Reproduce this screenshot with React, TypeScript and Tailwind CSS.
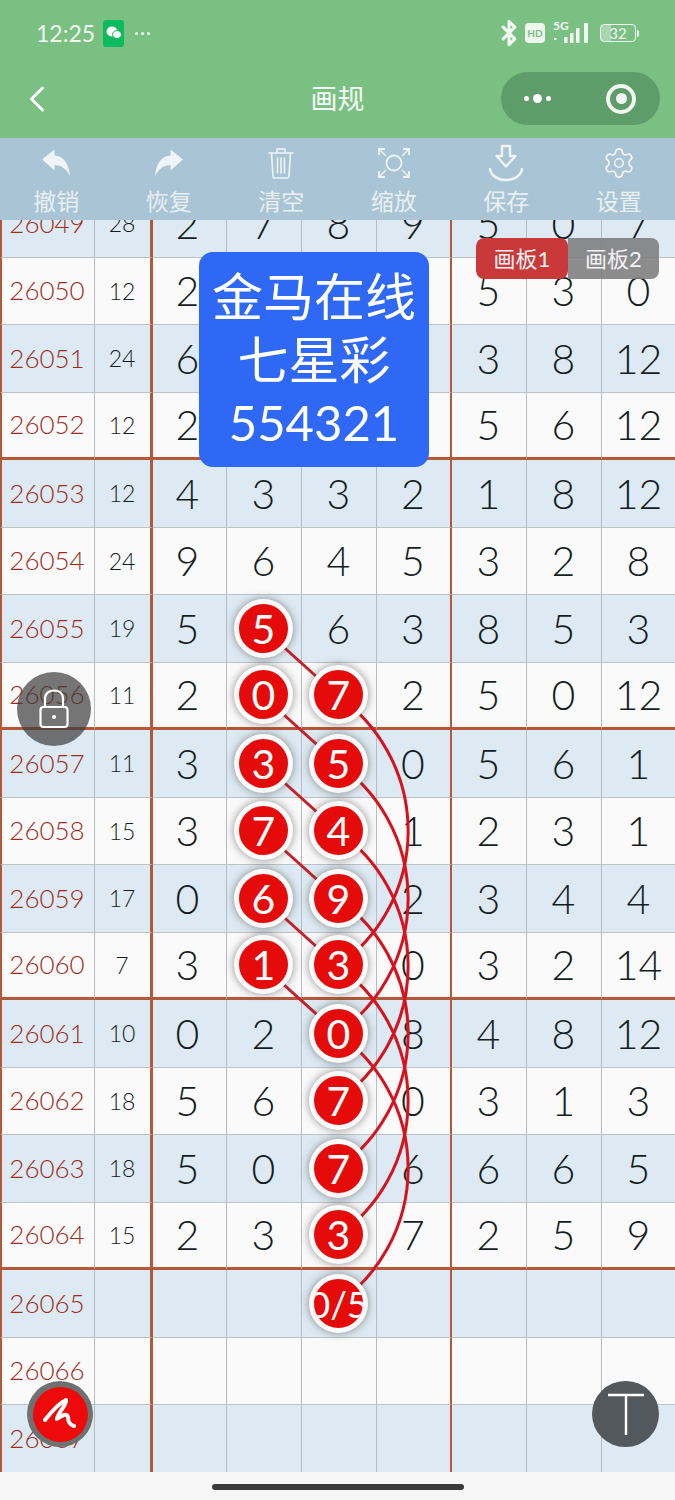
import React from "react";
import { ChevronLeft, Bluetooth, Settings } from "lucide-react";

type Row = { id: string; n: string; c: string[]; hit?: number[] };
const rows: Row[] = [
  { id: "26049", n: "28", c: ["2", "7", "8", "9", "5", "0", "7"] },
  { id: "26050", n: "12", c: ["2", "", "", "", "5", "3", "0"] },
  { id: "26051", n: "24", c: ["6", "", "", "", "3", "8", "12"] },
  { id: "26052", n: "12", c: ["2", "", "", "", "5", "6", "12"] },
  { id: "26053", n: "12", c: ["4", "3", "3", "2", "1", "8", "12"] },
  { id: "26054", n: "24", c: ["9", "6", "4", "5", "3", "2", "8"] },
  { id: "26055", n: "19", c: ["5", "5", "6", "3", "8", "5", "3"], hit: [1] },
  { id: "26056", n: "11", c: ["2", "0", "7", "2", "5", "0", "12"], hit: [1, 2] },
  { id: "26057", n: "11", c: ["3", "3", "5", "0", "5", "6", "1"], hit: [1, 2] },
  { id: "26058", n: "15", c: ["3", "7", "4", "1", "2", "3", "1"], hit: [1, 2] },
  { id: "26059", n: "17", c: ["0", "6", "9", "2", "3", "4", "4"], hit: [1, 2] },
  { id: "26060", n: "7", c: ["3", "1", "3", "0", "3", "2", "14"], hit: [1, 2] },
  { id: "26061", n: "10", c: ["0", "2", "0", "8", "4", "8", "12"], hit: [2] },
  { id: "26062", n: "18", c: ["5", "6", "7", "0", "3", "1", "3"], hit: [2] },
  { id: "26063", n: "18", c: ["5", "0", "7", "6", "6", "6", "5"], hit: [2] },
  { id: "26064", n: "15", c: ["2", "3", "3", "7", "2", "5", "9"], hit: [2] },
  { id: "26065", n: "", c: ["", "", "0/5", "", "", "", ""], hit: [2] },
  { id: "26066", n: "", c: ["", "", "", "", "", "", ""] },
  { id: "26067", n: "", c: ["", "", "", "", "", "", ""] },
];

const cy = (i: number) => 190 + 67.5 * i + 33.5;

function UndoIcon({ flip }: { flip?: boolean }) {
  return (
    <svg width="30" height="28" viewBox="0 0 30 28" className={flip ? "-scale-x-100" : ""}>
      <path d="M1 10.5 L13.5 0.5 L13.5 6.5 C22 7 28 14 29 27 C25 19.5 20 16 13.5 16 L13.5 21.5 Z" fill="#eef4f7" />
    </svg>
  );
}

function TrashIcon() {
  return (
    <svg width="26" height="32" viewBox="0 0 26 32" fill="none" stroke="#eef4f7" strokeWidth="1.6" strokeLinecap="round" strokeLinejoin="round">
      <path d="M1 6 H25 M9 5.5 V2 H17 V5.5" />
      <path d="M3.5 6 L5 29 C5 30 6 31 7 31 H19 C20 31 21 30 21 29 L22.5 6" />
      <path d="M9.5 11 V26 M13 11 V26 M16.5 11 V26" />
    </svg>
  );
}

function ScanIcon() {
  return (
    <svg width="32" height="32" viewBox="0 0 32 32" fill="none" stroke="#eef4f7" strokeWidth="1.8">
      <path d="M1 8 V2 H7 M25 2 H31 V8 M1 24 V30 H7 M25 30 H31 V24" />
      <path d="M1.5 2.5 L8 9 M30.5 2.5 L24 9 M1.5 29.5 L8 23 M30.5 29.5 L24 23" strokeWidth="1.4" />
      <circle cx="16" cy="16" r="7.5" />
    </svg>
  );
}

function SaveIcon() {
  return (
    <svg width="36" height="38" viewBox="0 0 36 38" fill="none" stroke="#eef4f7" strokeWidth="2.4" strokeLinecap="round" strokeLinejoin="round">
      <path d="M14 2 H22 V12 H27.5 L18 22.5 L8.5 12 H14 Z" />
      <path d="M2 25 C3 32 10 36 18 36 C26 36 33 32 34 25" />
    </svg>
  );
}

function Tool({ icon, label }: { icon: React.ReactNode; label: string }) {
  return (
    <div className="flex w-[113px] flex-col items-center">
      <div className="flex h-[42px] items-center justify-center">{icon}</div>
      <div className="mt-[2px] text-[23px] leading-[30px] text-[#e8f0f4]">{label}</div>
    </div>
  );
}

function Ball({ v }: { v: string }) {
  return (
    <div className={`relative z-20 flex h-[59px] w-[59px] shrink-0 items-center justify-center overflow-hidden rounded-full border-[5px] border-[#fbfbfb] bg-[#e60b0b] font-normal text-white shadow-[0_0_8px_rgba(70,70,70,0.6)] ${v.length > 2 ? "text-[37px]" : "text-[41px]"}`}>
      <span className="whitespace-nowrap">{v}</span>
    </div>
  );
}

function Table() {
  return (
    <div className="h-[1252px] overflow-hidden">
      <div className="-mt-[30px] grid grid-cols-[95px_58px_74px_75px_75px_75px_75px_75px_73px] auto-rows-[67.5px]">
        {rows.map((r, i) => {
          const bg = i % 2 === 0 ? "bg-[#deeaf3]" : "bg-[#fafafa]";
          const thick = i === 3 || i === 7 || i === 11 || i === 15;
          const bb = thick ? "border-b-[3px] border-b-[#b5583a]" : "border-b border-b-[#bcc2c6]";
          return (
            <React.Fragment key={r.id}>
              <div className={`${bg} ${bb} flex items-center justify-center border-l-2 border-l-[#b5583a] border-r border-r-[#b6bcc0] pr-[2px] text-[26px] font-light text-[#a02c1a]`}>
                {r.id}
              </div>
              <div className={`${bg} ${bb} flex items-center justify-center border-r-[3px] border-r-[#b5583a] pr-[1px] text-[23px] font-light text-[#141d22]`}>
                {r.n}
              </div>
              {r.c.map((v, j) => {
                const rb = j === 3 ? "border-r-[2px] border-r-[#b5583a]" : j === 6 ? "" : "border-r border-r-[#b6bcc0]";
                const pad = j === 0 ? "pr-[4px]" : j === 6 ? "" : "pr-[1px]";
                const hit = r.hit?.includes(j);
                return (
                  <div key={j} className={`${bg} ${bb} ${rb} ${pad} flex items-center justify-center text-[41px] font-light text-[#141d22]`}>
                    {hit ? <Ball v={v} /> : v}
                  </div>
                );
              })}
            </React.Fragment>
          );
        })}
      </div>
    </div>
  );
}

export default function App() {
  const straight = [6, 7, 8, 9, 10, 11];
  const arcs = [7, 8, 9, 10, 11, 12];
  return (
    <div className="relative h-[1500px] w-[675px] overflow-hidden bg-[#f6f6f6] font-['Lato','Noto_Sans_CJK_SC',sans-serif]">
      <header className="relative z-30 h-[138px] bg-[#7bc083] text-white">
        <div className="flex h-[66px] items-center pl-[36px] pr-[36px]">
          <span className="text-[23px] text-[#f2f8f2]">12:25</span>
          <div className="ml-[8px] flex h-[27px] w-[21px] items-center justify-center rounded-[3px] bg-[#0dbb5f]">
            <svg width="16" height="14" viewBox="0 0 16 14" fill="#fff">
              <ellipse cx="6" cy="5.5" rx="5.5" ry="5" />
              <ellipse cx="11" cy="8.5" rx="4.5" ry="4" stroke="#0dbb5f" strokeWidth="1" />
            </svg>
          </div>
          <span className="ml-[11px] flex gap-[3px]">
            <i className="h-[3px] w-[3px] rounded-full bg-white/90" />
            <i className="h-[3px] w-[3px] rounded-full bg-white/90" />
            <i className="h-[3px] w-[3px] rounded-full bg-white/90" />
          </span>
          <div className="ml-auto flex items-center">
            <Bluetooth size={28} strokeWidth={2.6} className="-mr-[2px] text-[#f2f8f2]" />
            <div className="ml-[4px] flex h-[20px] w-[20px] items-center justify-center rounded-[4px] bg-[#eef6ee] text-[10px] font-bold text-[#7bc083]">
              HD
            </div>
            <div className="ml-[8px] flex h-[24px] w-[40px]">
              <span className="-mt-[2px] w-0 text-[12px] font-bold leading-[14px] text-[#f2f8f2]">5G</span>
              <svg width="40" height="24" viewBox="0 0 40 24" fill="#f2f8f2">
                <rect x="1" y="17" width="2.5" height="2" />
                <rect x="11" y="16" width="3.5" height="6" />
                <rect x="17" y="12" width="3.5" height="10" />
                <rect x="23" y="7" width="3.5" height="15" />
                <rect x="31" y="2" width="4" height="20" />
              </svg>
            </div>
            <div className="ml-[7px] flex h-[18px] w-[36px] items-center justify-center rounded-[4px] border border-[#f2f8f2] bg-[linear-gradient(90deg,rgba(255,255,255,0.35)_30%,transparent_30%)] text-[15px] leading-none text-[#f2f8f2]">
              32
            </div>
            <div className="ml-[1px] h-[7px] w-[2px] rounded-r bg-[#f2f8f2]" />
          </div>
        </div>
        <div className="relative mt-[6px] flex h-[53px] items-center justify-center">
          <ChevronLeft size={44} strokeWidth={1.6} className="absolute left-[15px] text-white" />
          <span className="text-[27px] leading-none text-[#f4faf4]">画规</span>
          <div className="absolute left-[501px] flex h-[53px] w-[159px] items-center rounded-full bg-[#5e9d69]">
            <span className="ml-[23px] flex items-center gap-[4px]">
              <i className="h-[5px] w-[5px] rounded-full bg-white" />
              <i className="h-[9px] w-[9px] rounded-full bg-white" />
              <i className="h-[5px] w-[5px] rounded-full bg-white" />
            </span>
            <span className="ml-auto mr-[24px] flex h-[30px] w-[30px] items-center justify-center rounded-full border-[4px] border-[#f0f6f0]">
              <i className="h-[11px] w-[11px] rounded-full bg-[#f0f6f0]" />
            </span>
          </div>
        </div>
      </header>

      <nav className="relative z-30 flex h-[82px] justify-center bg-[#a9c4d4] pt-[4px]">
        <Tool icon={<UndoIcon />} label="撤销" />
        <Tool icon={<UndoIcon flip />} label="恢复" />
        <Tool icon={<TrashIcon />} label="清空" />
        <Tool icon={<ScanIcon />} label="缩放" />
        <Tool icon={<SaveIcon />} label="保存" />
        <Tool icon={<Settings size={34} strokeWidth={1.2} className="text-[#eef4f7]" />} label="设置" />
      </nav>

      <Table />

      <svg className="pointer-events-none absolute left-0 top-0 z-10" width="675" height="1500" fill="none" stroke="#d8121c">
        {straight.map((i) => (
          <line key={i} x1="263" y1={cy(i)} x2="338" y2={cy(i + 1)} strokeWidth="3" stroke="#c8202a" />
        ))}
        {arcs.map((i) => (
          <path key={i} d={`M338 ${cy(i)} A 165 165 0 0 1 338 ${cy(i + 4)}`} strokeWidth="3" />
        ))}
      </svg>

      <div className="absolute left-[199px] top-[252px] z-20 flex h-[215px] w-[230px] flex-col items-center justify-center rounded-[14px] bg-[#2f68f5] text-[51px] leading-[63px] text-white">
        <div>金马在线</div>
        <div>七星彩</div>
        <div className="text-[49px]">554321</div>
      </div>

      <div className="absolute left-[476px] top-[238px] z-20 flex h-[41px] w-[183px] overflow-hidden rounded-[8px] text-[22px] text-[#f3f3f3]">
        <div className="flex w-[92px] items-center justify-center rounded-[8px] bg-[#c9393a]">画板1</div>
        <div className="flex flex-1 items-center justify-center bg-[#808080]/90">画板2</div>
      </div>

      <div className="absolute left-[17px] top-[672px] z-20 flex h-[74px] w-[74px] items-center justify-center rounded-full bg-[#3c3c3c]/70">
        <svg width="30" height="40" viewBox="0 0 30 40" fill="none" stroke="#fff" strokeWidth="2.2">
          <path d="M6 18 V10 C6 4.5 10 1.5 15 1.5 C20 1.5 24 4.5 24 10 V18" />
          <rect x="1.5" y="18" width="27" height="20" rx="3" />
          <circle cx="15" cy="28" r="2" fill="#fff" stroke="none" />
        </svg>
      </div>

      <div className="absolute left-[27px] top-[1381px] z-20 flex h-[66px] w-[66px] items-center justify-center rounded-full bg-[#6d7270]">
        <div className="flex h-[55px] w-[55px] items-center justify-center rounded-full bg-[#ee0a0a]">
          <svg width="36" height="32" viewBox="0 0 36 32" fill="none" stroke="#fff" strokeWidth="4" strokeLinecap="round" strokeLinejoin="round">
            <path d="M3 22 C10 13 17 5 24 2 C25 7 16 14 15 21 C20 17 25 15 26 19 C26 23 28 27 32 28" />
          </svg>
        </div>
      </div>

      <div className="absolute left-[592px] top-[1381px] z-20 flex h-[66px] w-[67px] items-center justify-center rounded-full bg-[#53585c]">
        <svg width="40" height="46" viewBox="0 0 40 46" stroke="#fff" strokeWidth="2.4" fill="none">
          <path d="M2 4 H38 M20 4 V44" />
        </svg>
      </div>

      <div className="mt-[12px] flex justify-center">
        <div className="h-[6px] w-[252px] rounded-full bg-[#3a3a3a]" />
      </div>
    </div>
  );
}
